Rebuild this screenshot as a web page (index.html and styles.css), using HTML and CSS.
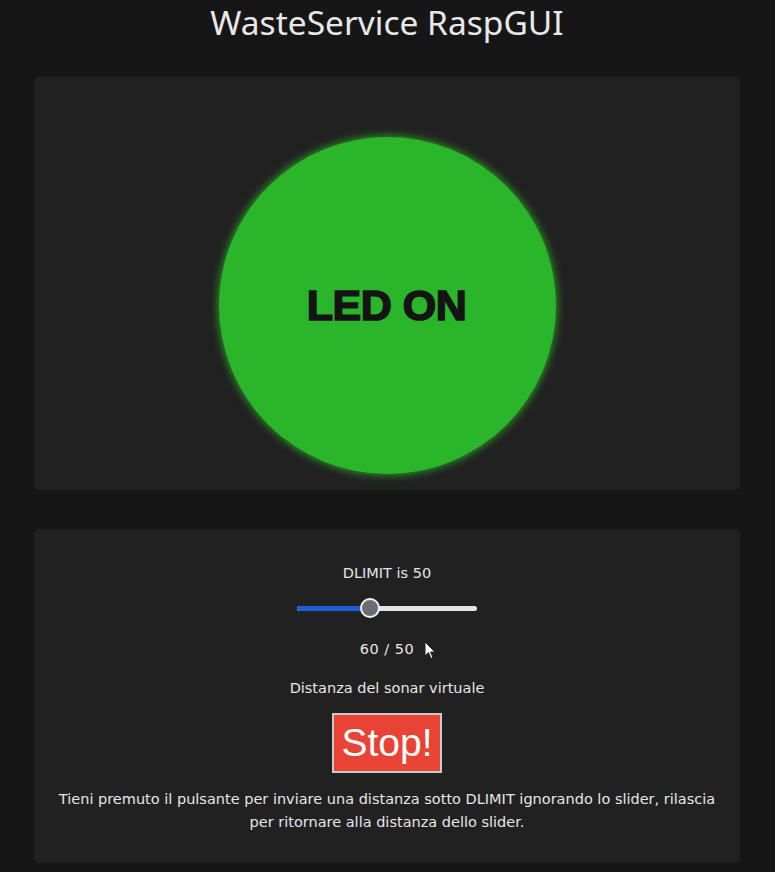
FILE: index.html
```html
<!DOCTYPE html>
<html lang="it">
<head>
<meta charset="utf-8">
<title>WasteService RaspGUI</title>
<link rel="stylesheet" href="styles.css">
</head>
<body>
<h1 class="title">WasteService RaspGUI</h1>
<section class="card led-card">
  <div class="led"><span class="led-label">LED ON</span></div>
</section>
<section class="card control-card">
  <p class="dlimit">DLIMIT is 50</p>
  <div class="slider">
    <div class="track"><div class="fill" style="width:40%"></div></div>
    <div class="thumb" style="left:40%"></div>
  </div>
  <p class="value">60 / 50<svg class="cursor" width="12" height="19" viewBox="0 0 12 19"><path d="M1 1 L1 15 L4.5 11.5 L7 17.5 L9 16.6 L6.6 11 L11 11 Z" fill="#fff" stroke="#222" stroke-width="1"/></svg></p>
  <p class="caption">Distanza del sonar virtuale</p>
  <button class="stop">Stop!</button>
  <p class="hint">Tieni premuto il pulsante per inviare una distanza sotto DLIMIT ignorando lo slider, rilascia per ritornare alla distanza dello slider.</p>
</section>
</body>
</html>
```
FILE: styles.css
```css
html, body {
  margin: 0;
  padding: 0;
  background: #161616;
}
body {
  padding: 0 35px 0 34px;
  color: #e6e6e6;
  font-family: "DejaVu Sans", sans-serif;
}
.title {
  margin: 0;
  height: 77px;
  padding-top: 0;
  box-sizing: border-box;
  text-align: center;
  font-family: "Noto Sans", sans-serif;
  font-weight: 400;
  font-size: 33.5px;
  line-height: 44px;
  color: #e8e8e8;
}
.card {
  background: #212121;
  border-radius: 5px;
}
.led-card {
  height: 413px;
  box-sizing: border-box;
  padding-top: 60px;
  display: flex;
  justify-content: center;
}
.led {
  width: 337px;
  height: 337px;
  border-radius: 50%;
  background: #2bb52b;
  box-shadow: 0 0 8px 1px rgba(50, 200, 40, 0.75);
  display: flex;
  align-items: center;
  justify-content: center;
}
.led-label {
  font-family: "Liberation Sans", Arial, sans-serif;
  font-weight: 700;
  font-size: 43px;
  color: #141414;
  -webkit-text-stroke: 1.6px #141414;
  letter-spacing: -0.5px;
  margin-left: -1px;
}
.control-card {
  margin-top: 39px;
  height: 334px;
  box-sizing: border-box;
  padding-top: 33px;
  display: flex;
  flex-direction: column;
  align-items: center;
  font-size: 14.5px;
}
.control-card p {
  margin: 0;
}
.dlimit {
  line-height: 22px;
}
.slider {
  position: relative;
  width: 180px;
  height: 20px;
  margin-top: 14px;
  margin-left: -1px;
  display: flex;
  align-items: center;
}
.track {
  width: 100%;
  height: 5px;
  border-radius: 3px;
  background: #e4e4e4;
  overflow: hidden;
}
.fill {
  height: 100%;
  background: #1d5fd6;
}
.thumb {
  position: absolute;
  top: 50%;
  width: 16px;
  height: 16px;
  margin-left: -9px;
  margin-top: -10px;
  border-radius: 50%;
  border: 2px solid #f2f2f2;
  background: #6c6c76;
}
.value {
  position: relative;
  margin-top: 20px !important;
  line-height: 22px;
  letter-spacing: 0.5px;
}
.cursor {
  position: absolute;
  left: calc(100% + 10px);
  top: 3px;
}
.caption {
  margin-top: 17px !important;
  line-height: 22px;
}
.stop {
  margin-top: 14px;
  width: 110px;
  height: 60px;
  padding: 0;
  background: #e84335;
  border: 2px solid #c9c9c9;
  color: #fff;
  font-family: "Liberation Sans", Arial, sans-serif;
  font-size: 39px;
  line-height: 54px;
}
.hint {
  margin-top: 15px !important;
  width: 680px;
  text-align: center;
  line-height: 23px;
}
```
